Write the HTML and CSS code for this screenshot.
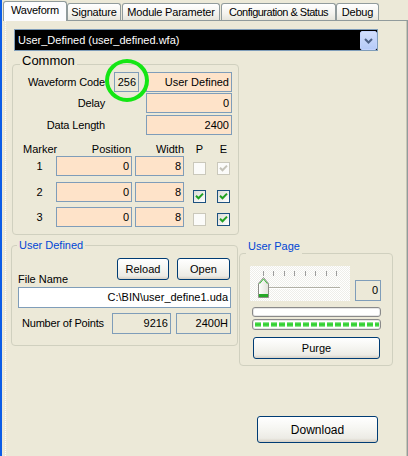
FILE: index.html
```html
<!DOCTYPE html>
<html>
<head>
<meta charset="utf-8">
<link rel="stylesheet" href="styles.css">
</head>
<body>
<div class="window">
  <div class="tabs">
    <div class="tab active w-wave">Waveform</div>
    <div class="tab w-sig">Signature</div>
    <div class="tab w-mod">Module Parameter</div>
    <div class="tab w-conf">Configuration &amp; Status</div>
    <div class="tab w-dbg">Debug</div>
  </div>
  <div class="panel">
    <div class="combo">
      <span class="combo-text">User_Defined (user_defined.wfa)</span>
      <span class="combo-btn"><svg width="15" height="17" viewBox="0 0 15 17"><polyline points="4,7 7.5,10.5 11,7" fill="none" stroke="#4d6185" stroke-width="2"/></svg></span>
    </div>
    <div class="main">
      <div class="left-col">
        <div class="group common">
          <div class="gtitle big">Common</div>
          <div class="frow first">
            <div class="flabel">Waveform Code</div>
            <div class="fld ro code">256</div>
            <div class="fld wide">User Defined</div>
          </div>
          <div class="frow r2">
            <div class="flabel">Delay</div>
            <div class="fld wide solo">0</div>
          </div>
          <div class="frow r3">
            <div class="flabel">Data Length</div>
            <div class="fld wide solo">2400</div>
          </div>
          <div class="mhead">
            <div class="mcol1">Marker</div>
            <div class="mpos">Position</div>
            <div class="mwid">Width</div>
            <div class="mp">P</div>
            <div class="me">E</div>
          </div>
          <div class="mrow">
            <div class="mnum">1</div>
            <div class="fld pos">0</div>
            <div class="fld wid">8</div>
            <span class="cb dis cp"></span>
            <span class="cb dis ce"><svg width="11" height="11" viewBox="0 0 11 11"><polyline points="2,4.8 4.5,7.3 9,2.6" fill="none" stroke="#c5c3b8" stroke-width="2"/></svg></span>
          </div>
          <div class="mrow r-2">
            <div class="mnum">2</div>
            <div class="fld pos">0</div>
            <div class="fld wid">8</div>
            <span class="cb on cp low"><svg width="11" height="11" viewBox="0 0 11 11"><polyline points="2,4.8 4.5,7.3 9,2.6" fill="none" stroke="#21a121" stroke-width="2"/></svg></span>
            <span class="cb on ce low"><svg width="11" height="11" viewBox="0 0 11 11"><polyline points="2,4.8 4.5,7.3 9,2.6" fill="none" stroke="#21a121" stroke-width="2"/></svg></span>
          </div>
          <div class="mrow r-3">
            <div class="mnum">3</div>
            <div class="fld pos">0</div>
            <div class="fld wid">8</div>
            <span class="cb dis cp"></span>
            <span class="cb on ce"><svg width="11" height="11" viewBox="0 0 11 11"><polyline points="2,4.8 4.5,7.3 9,2.6" fill="none" stroke="#21a121" stroke-width="2"/></svg></span>
          </div>
        </div>
        <div class="group userdef">
          <div class="gtitle blue">User Defined</div>
          <div class="file-row">
            <div class="file-label">File Name</div>
            <button class="btn reload">Reload</button>
            <button class="btn open">Open</button>
          </div>
          <div class="fld white path">C:\BIN\user_define1.uda</div>
          <div class="num-row">
            <div class="num-label">Number of Points</div>
            <div class="fld ro n1">9216</div>
            <div class="fld ro n2">2400H</div>
          </div>
        </div>
      </div>
      <div class="right-col">
        <div class="group userpage">
          <div class="gtitle blue tall">User Page</div>
          <div class="slider-row">
            <div class="slider">
              <div class="ticks"><i></i><i></i><i></i><i></i><i></i><i></i><i></i><i></i></div>
              <div class="track"></div>
              <svg class="thumb" width="11" height="21" viewBox="0 0 11 21">
                <defs><linearGradient id="tg" x1="0" x2="1" y1="0" y2="0"><stop offset="0" stop-color="#ffffff"/><stop offset="1" stop-color="#e2e2da"/></linearGradient></defs>
                <path d="M0.5 6.5 L5.5 0.5 L10.5 6.5 V20.5 H0.5 Z" fill="url(#tg)" stroke="#8c8c86"/>
                <path d="M1.5 6.8 L5.5 2 L9.5 6.8" fill="none" stroke="#3fbf3f" stroke-width="1"/>
                <rect x="1" y="17" width="9" height="3" fill="#27a827"/>
              </svg>
            </div>
            <div class="fld ro val">0</div>
          </div>
          <div class="prog p1"></div>
          <div class="prog p2"><div class="chunks"></div></div>
          <button class="btn purge">Purge</button>
        </div>
        <button class="btn download">Download</button>
      </div>
    </div>
  </div>
  <div class="annot"></div>
</div>
</body>
</html>
```
FILE: styles.css
```css
html, body {
  margin: 0;
  padding: 0;
}
body {
  width: 408px;
  height: 456px;
  overflow: hidden;
  background: #ece9d8;
  font-family: "Liberation Sans", Arial, sans-serif;
  font-size: 11px;
  color: #000;
}
.window {
  position: relative;
  box-sizing: border-box;
  width: 408px;
  height: 456px;
  border-left: 2px solid #0c5ce6;
}

/* tabs */
.tabs {
  display: flex;
  align-items: flex-end;
  height: 20px;
  padding-left: 1px;
}
.tab {
  box-sizing: border-box;
  height: 17px;
  border: 1px solid #919b9c;
  border-bottom: none;
  border-radius: 3px 3px 0 0;
  background: linear-gradient(#ffffff, #f4f3ee 60%, #e6e5dc);
  display: flex;
  align-items: center;
  justify-content: center;
  white-space: nowrap;
  letter-spacing: -0.2px;
  line-height: 13px;
}
.tab.active {
  height: 20px;
  margin-bottom: -1px;
  background: #fcfcfe;
  position: relative;
  z-index: 1;
  padding-bottom: 2px;
}
.w-wave { width: 64px; }
.w-sig { width: 54px; }
.w-mod { width: 98px; margin-left: 1px; }
.w-conf { width: 115px; margin-left: 1px; letter-spacing: -0.5px; }
.w-dbg { width: 43px; }

/* panel */
.panel {
  box-sizing: border-box;
  margin-left: 3px;
  width: 403px;
  height: 436px;
  border-top: 1px solid #919b9c;
  border-left: 1px dotted #ffffff;
  border-right: 1px solid #919b9c;
  box-shadow: inset -1px 0 #c9c6b6;
  overflow: hidden;
}

.combo {
  box-sizing: border-box;
  display: flex;
  margin: 8px 0 0 8px;
  width: 364px;
  height: 22px;
  border: 1px solid #7f9db9;
  background: #000;
  padding: 1px 0 0 1px;
}
.combo-text {
  flex: 1;
  color: #fff;
  padding-left: 2px;
  line-height: 18px;
  white-space: nowrap;
}
.combo-btn {
  box-sizing: border-box;
  width: 17px;
  height: 19px;
  border: 1px solid #c3d3fd;
  border-radius: 2px;
  background: linear-gradient(#d2defc, #b6cbf8);
  display: flex;
  align-items: center;
  justify-content: center;
}
.combo-btn svg { display: block; }

.main {
  display: flex;
}
.left-col {
  margin-left: 5px;
  width: 228px;
}
.right-col {
  width: 154px;
}

/* group boxes */
.group {
  box-sizing: border-box;
  border: 1px solid #d0d0bf;
  border-radius: 4px;
}
.gtitle {
  width: fit-content;
  padding: 0 2px;
  background: #ece9d8;
  line-height: 13px;
  white-space: nowrap;
}
.gtitle.big {
  font-size: 13px;
  line-height: 15px;
  margin: -12px 0 0 7px;
}
.gtitle.blue {
  color: #0046d5;
  margin: -7px 0 0 5px;
}
.gtitle.blue.tall {
  line-height: 16px;
  margin: -16px 0 0 6px;
}

.common {
  margin: 13px 0 0 1px;
  width: 227px;
  height: 171px;
}

/* fields */
.fld {
  box-sizing: border-box;
  height: 20px;
  border: 1px solid #7f9db9;
  background: #fee3c9;
  text-align: right;
  padding-right: 2px;
  line-height: 18px;
  white-space: nowrap;
  overflow: hidden;
}
.fld.ro { background: #ece9d8; }
.fld.white { background: #ffffff; }

.frow {
  display: flex;
  align-items: center;
  height: 20px;
}
.frow.first { margin-top: 4px; }
.frow.r2 { margin-top: 1px; }
.frow.r3 { margin-top: 2px; }
.flabel {
  width: 92px;
  text-align: right;
  white-space: nowrap;
  letter-spacing: -0.15px;
}
.code { margin-left: 9px; width: 25px; }
.wide { margin-left: 7px; width: 86px; }
.wide.solo { margin-left: 41px; }

.mhead {
  display: flex;
  height: 13px;
  line-height: 13px;
  margin-top: 8px;
  padding-left: 10px;
}
.mcol1 { width: 33px; }
.mpos { box-sizing: border-box; width: 76px; text-align: right; padding-right: 1px; }
.mwid { margin-left: 3px; width: 49px; text-align: right; }
.mp { margin-left: 9px; width: 13px; text-align: center; }
.me { margin-left: 11px; width: 13px; text-align: center; }

.mrow {
  display: flex;
  align-items: flex-start;
  height: 20px;
  padding-left: 10px;
}
.mrow.r-2 { margin-top: 6px; }
.mrow.r-3 { margin-top: 5px; }
.mnum { width: 33px; text-align: center; line-height: 20px; }
.pos { width: 76px; }
.wid { margin-left: 3px; width: 49px; }

.cb {
  box-sizing: border-box;
  width: 13px;
  height: 13px;
  margin-top: 6px;
  border: 1px solid #1c5180;
  background: linear-gradient(135deg, #dcdcd7, #ffffff);
  display: block;
}
.cb svg { display: block; }
.cb.dis {
  border-color: #cac8bb;
  background: #fbfbf9;
}
.cb.low { margin-top: 8px; }
.cp { margin-left: 9px; }
.ce { margin-left: 11px; }

/* user defined */
.userdef {
  margin-top: 10px;
  width: 227px;
  height: 101px;
}
.file-row {
  display: flex;
  height: 28px;
  margin-top: 6px;
  padding: 0 7px 0 6px;
}
.file-label {
  align-self: flex-end;
  line-height: 13px;
  white-space: nowrap;
}
.btn {
  box-sizing: border-box;
  border: 1px solid #003c74;
  border-radius: 3px;
  background: linear-gradient(#ffffff 0%, #f6f6f2 45%, #ecebe5 85%, #d6d0c5 100%);
  font-family: inherit;
  font-size: 11px;
  color: #000;
  padding: 0;
  margin: 0;
  display: flex;
  align-items: center;
  justify-content: center;
  height: 22px;
}
.reload { margin-left: auto; width: 52px; }
.open { margin-left: 8px; width: 53px; }
.path {
  margin: 1px 0 0 6px;
  width: 213px;
  height: 21px;
  line-height: 19px;
}
.num-row {
  display: flex;
  align-items: center;
  height: 21px;
  margin-top: 5px;
  padding-left: 10px;
}
.num-label { width: 90px; white-space: nowrap; line-height: 13px; letter-spacing: -0.2px; }
.n1 { width: 59px; height: 21px; line-height: 19px; }
.n2 { margin-left: 5px; width: 55px; height: 21px; line-height: 19px; }

/* user page */
.userpage {
  margin-top: 202px;
  width: 154px;
  height: 113px;
}
.slider-row {
  display: flex;
  align-items: flex-end;
  margin-top: 12px;
  padding-left: 10px;
}
.slider {
  position: relative;
  width: 100px;
  height: 35px;
  background: repeating-conic-gradient(#ffffff 0 25%, #eeeeea 0 50%) 0 0 / 2px 2px;
  overflow: hidden;
}
.ticks {
  display: flex;
  justify-content: space-between;
  margin: 5px 0 0 13px;
  width: 74px;
  height: 5px;
}
.ticks i {
  display: block;
  width: 1px;
  height: 5px;
  background: #9c9c9c;
}
.track {
  margin: 11px 0 0 18px;
  width: 72px;
  height: 1px;
  background: #b0afa5;
  border-bottom: 1px solid #ffffff;
}
.thumb {
  position: absolute;
  left: 8px;
  top: 11px;
}
.val {
  margin-left: 5px;
  width: 26px;
  height: 21px;
  line-height: 19px;
}
.prog {
  box-sizing: border-box;
  margin-left: 12px;
  width: 129px;
  border: 1px solid #8a8a8a;
  border-radius: 3px;
  background: #ffffff;
  box-shadow: inset 0 0 0 1px #e6e6e6;
}
.p1 { margin-top: 6px; height: 10px; }
.p2 { margin-top: 2px; height: 11px; padding: 2px 1px 2px 2px; }
.chunks {
  height: 100%;
  background:
    repeating-linear-gradient(90deg, transparent 0 6px, #ffffff 6px 8px),
    linear-gradient(#b4ecb4, #31d131 35%, #31d131 65%, #b4ecb4);
}
.purge {
  margin: 7px 0 0 13px;
  width: 127px;
  height: 22px;
}
.download {
  margin: 50px 0 0 18px;
  width: 121px;
  height: 27px;
  font-size: 12px;
}

/* annotation */
.annot {
  position: absolute;
  left: 103px;
  top: 59px;
  width: 44px;
  height: 43px;
  box-sizing: border-box;
  border: 4px solid #14e614;
  border-radius: 50%;
}
```
